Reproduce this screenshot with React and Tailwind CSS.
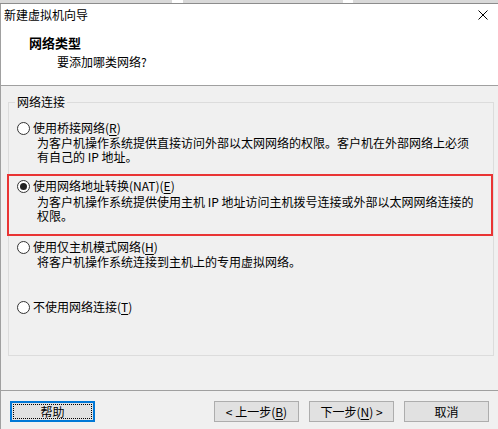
import React from "react";

function Radio({ checked }) {
  return (
    <div className="w-[13px] h-[13px] shrink-0 rounded-full border border-[#333333] bg-white flex items-center justify-center">
      {checked ? <div className="w-[7px] h-[7px] rounded-full bg-[#222222]" /> : null}
    </div>
  );
}

function U({ children }) {
  return <span className="underline underline-offset-[2px]">{children}</span>;
}

function Btn({ children, focused }) {
  if (focused) {
    return (
      <div className="w-[85px] h-[21px] border-2 border-[#0078d7] bg-[#e1e1e1] p-px">
        <div className="w-full h-full border border-dotted border-black flex items-center justify-center leading-[16px]">
          {children}
        </div>
      </div>
    );
  }
  return (
    <div className="w-[85px] h-[21px] border border-[#adadad] bg-[#e1e1e1] flex items-center justify-center leading-[16px]">
      {children}
    </div>
  );
}

export default function App() {
  return (
    <div className="w-[498px] h-[429px] bg-[#f0f0f0] overflow-hidden flex flex-col text-[12px] text-black font-['Noto_Sans_CJK_SC','Microsoft_YaHei',sans-serif]">
      <div className="h-[3px] flex shrink-0">
        <div className="w-[172px] bg-[#d9d9d9]" />
        <div className="w-[11px] bg-white" />
        <div className="w-[160px] bg-[#d9d9d9]" />
        <div className="w-[10px] bg-white" />
        <div className="flex-1 bg-[#d9d9d9]" />
      </div>
      <div className="h-px bg-[#8c8c8c] shrink-0" />
      <div className="flex-1 flex flex-col border-l border-[#a0a0a0]">
        <div className="h-[82px] bg-white border-b border-[#a0a0a0] flex flex-col shrink-0">
          <div className="h-[22px] flex items-center justify-between pl-[3px] pr-[10px]">
            <span className="leading-[16px]">新建虚拟机向导</span>
            <svg width="10" height="10" viewBox="0 0 10 10">
              <path d="M0.5 0.5 L9.5 9.5 M9.5 0.5 L0.5 9.5" stroke="#000" strokeWidth="1" fill="none" />
            </svg>
          </div>
          <div className="mt-[9px] pl-[28px] text-[13px] font-bold leading-[16px]">网络类型</div>
          <div className="mt-[3px] pl-[56px] leading-[16px]">要添加哪类网络?</div>
        </div>
        <div className="flex-1 flex flex-col">
          <fieldset className="mt-[8px] ml-[7px] w-[481px] border border-[#dcdcdc] pt-[10px] pb-[40px]">
            <legend className="ml-[6px] px-[2px] leading-[16px]">网络连接</legend>
            <div className="flex items-center h-[16px] pl-[8px] gap-[3px]">
              <Radio />
              <span className="leading-[16px]">使用桥接网络(<U>R</U>)</span>
            </div>
            <div className="pl-[28px] leading-[14px] whitespace-nowrap">
              为客户机操作系统提供直接访问外部以太网网络的权限。客户机在外部网络上必须
              <br />
              有自己的 IP 地址。
            </div>
            <div className="mt-[10px] -ml-[2px] w-[486px] border-2 border-[#e93434] pt-[2px] pb-[11px]">
              <div className="flex items-center h-[16px] pl-[8px] gap-[3px]">
                <Radio checked />
                <span className="leading-[16px]">使用网络地址转换(NAT)(<U>E</U>)</span>
              </div>
              <div className="mt-px pl-[28px] leading-[14px] whitespace-nowrap">
                为客户机操作系统提供使用主机 IP 地址访问主机拨号连接或外部以太网网络连接的
                <br />
                权限。
              </div>
            </div>
            <div className="mt-[3px] flex items-center h-[16px] pl-[8px] gap-[3px]">
              <Radio />
              <span className="leading-[16px]">使用仅主机模式网络(<U>H</U>)</span>
            </div>
            <div className="pl-[28px] leading-[14px] whitespace-nowrap">
              将客户机操作系统连接到主机上的专用虚拟网络。
            </div>
            <div className="mt-[30px] flex items-center h-[16px] pl-[8px] gap-[3px]">
              <Radio />
              <span className="leading-[16px]">不使用网络连接(<U>T</U>)</span>
            </div>
          </fieldset>
          <div className="flex-1" />
          <div className="h-px bg-[#a0a0a0] shrink-0" />
          <div className="h-[38px] shrink-0 flex items-start pt-[10px] pl-[9px] pr-[9px]">
            <Btn focused>帮助</Btn>
            <div className="flex-1" />
            <div className="flex gap-[10px]">
              <Btn>&lt; 上一步(<U>B</U>)</Btn>
              <Btn>下一步(<U>N</U>) &gt;</Btn>
              <Btn>取消</Btn>
            </div>
          </div>
        </div>
      </div>
    </div>
  );
}
